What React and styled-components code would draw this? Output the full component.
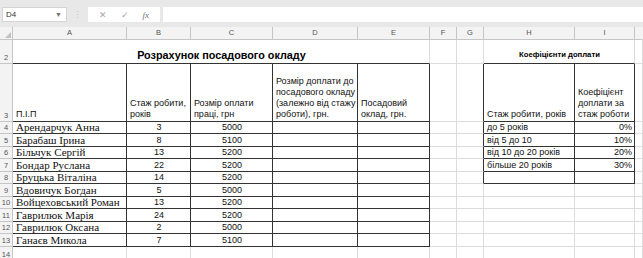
import React from "react";
import styled, { createGlobalStyle } from "styled-components";

const GlobalStyle = createGlobalStyle`
  html, body {
    margin: 0;
    padding: 0;
    background: #ffffff;
    font-family: "Liberation Sans", Arial, sans-serif;
  }
`;

const DARK = "#333333";
const GRID = "#dcdcdc";
const HEAD_LINE = "#c6c6c6";

const Page = styled.div`
  width: 643px;
  height: 258px;
  overflow: hidden;
  background: #fff;
`;

const Toolbar = styled.div`
  display: flex;
  align-items: center;
  height: 27px;
  box-sizing: border-box;
  padding: 7px 0 5px 2px;
  background: #e8e8e8;
`;

const NameBox = styled.div`
  display: flex;
  align-items: center;
  justify-content: space-between;
  width: 65px;
  height: 15px;
  box-sizing: border-box;
  padding: 0 4px 0 3px;
  background: #fff;
  border: 1px solid #d4d4d4;
  font-size: 8px;
  color: #333;
`;

const Caret = styled.span`
  font-size: 7px;
  color: #777;
`;

const Dots = styled.div`
  width: 21px;
  text-align: center;
  color: #c4c4c4;
  font-size: 9px;
`;

const FuncBox = styled.div`
  display: flex;
  align-items: center;
  justify-content: space-around;
  width: 72px;
  height: 15px;
  box-sizing: border-box;
  padding: 0 4px;
  background: #fff;
  margin-right: 3px;
  color: #a8a8a8;
  font-size: 9px;
`;

const Fx = styled.span`
  font-family: "Liberation Serif", serif;
  font-style: italic;
  font-size: 9px;
  color: #777;
`;

const Formula = styled.div`
  flex: 1;
  height: 15px;
  background: #fff;
`;

const Sheet = styled.div`
  display: grid;
  grid-template-columns: 13px 114px 64px 82px 85px 72px 27px 27px 91px 60px 1fr;
  grid-template-rows: 13px 23.5px 58px repeat(10, 12.5px) 14px;
`;

const Head = styled.div`
  display: flex;
  align-items: ${(p) => (p.$row ? "flex-end" : "center")};
  justify-content: center;
  box-sizing: border-box;
  background: #f3f3f3;
  border-right: 1px solid ${(p) => p.$br || HEAD_LINE};
  border-bottom: 1px solid ${(p) => p.$bb || HEAD_LINE};
  font-size: 7.5px;
  color: #555;
  line-height: 10px;
  overflow: hidden;
  position: relative;
`;

const Corner = styled.svg`
  position: absolute;
  right: 1px;
  bottom: 1px;
`;

const Cell = styled.div`
  grid-column: span ${(p) => p.$span || 1};
  display: flex;
  align-items: flex-end;
  justify-content: ${(p) =>
    p.$h === "center" ? "center" : p.$h === "right" ? "flex-end" : "flex-start"};
  box-sizing: border-box;
  padding: 0 2px 0 3px;
  border-right: 1px solid ${(p) => p.$br};
  border-bottom: 1px solid ${(p) => p.$bb};
  white-space: nowrap;
  overflow: hidden;
  color: #111;
  font-family: ${(p) =>
    p.$serif ? '"Liberation Serif", "Times New Roman", serif' : '"Liberation Sans", Arial, sans-serif'};
  font-size: ${(p) => (p.$serif ? "11px" : "9px")};
  line-height: ${(p) => (p.$serif ? "12px" : "11px")};
`;

const Title = styled.span`
  font-weight: bold;
  font-size: ${(p) => p.$size};
  line-height: 14px;
  padding-bottom: 1px;
  color: #000;
`;

const Lines = styled.div`
  display: flex;
  flex-direction: column;
  padding-bottom: 1px;
  line-height: 11px;
`;

const letters = ["A", "B", "C", "D", "E", "F", "G", "H", "I", ""];

const names = [
  "Арендарчук Анна",
  "Барабаш Ірина",
  "Більчук Сергій",
  "Бондар Руслана",
  "Бруцька Віталіна",
  "Вдовичук Богдан",
  "Войцеховський Роман",
  "Гаврилюк Марія",
  "Гаврилюк Оксана",
  "Ганаєв Микола",
];
const stazh = [3, 8, 13, 22, 14, 5, 13, 24, 2, 7];
const pay = [5000, 5100, 5200, 5200, 5200, 5000, 5200, 5200, 5000, 5100];
const coef = [
  ["до 5 років", "0%"],
  ["від 5 до 10", "10%"],
  ["від 10 до 20 років", "20%"],
  ["більше 20 років", "30%"],
];

const headers = {
  0: ["П.І.П"],
  1: ["Стаж робити,", "років"],
  2: ["Розмір оплати", "праці, грн"],
  3: ["Розмір доплати до", "посадового окладу", "(залежно від стажу", "роботи), грн."],
  4: ["Посадовий", "оклад, грн."],
  7: ["Стаж робити, років"],
  8: ["Коефіцієнт", "доплати за", "стаж роботи"],
};

const boxed = (r, c) =>
  (r >= 3 && r <= 13 && c >= 0 && c <= 4) || (r >= 3 && r <= 8 && (c === 7 || c === 8));

const edge = (r, c) => ({
  $br: boxed(r, c) || boxed(r, c + 1) ? DARK : GRID,
  $bb: boxed(r, c) || boxed(r + 1, c) ? DARK : GRID,
});

function content(r, c) {
  if (r === 3 && headers[c]) {
    return { node: <Lines>{headers[c].map((l) => <span key={l}>{l}</span>)}</Lines> };
  }
  const i = r - 4;
  if (r >= 4 && r <= 13) {
    if (c === 0) return { node: names[i], serif: true };
    if (c === 1) return { node: stazh[i], h: "center" };
    if (c === 2) return { node: pay[i], h: "center" };
  }
  if (r >= 4 && r <= 7) {
    if (c === 7) return { node: coef[i][0] };
    if (c === 8) return { node: coef[i][1], h: "right" };
  }
  return { node: null };
}

const App = () => {
  const cells = [];

  cells.push(
    <Head key="corner">
      <Corner width="6" height="6" viewBox="0 0 6 6">
        <polygon points="6,0 6,6 0,6" fill="#c2c2c2" />
      </Corner>
    </Head>
  );
  letters.forEach((l, c) =>
    cells.push(
      <Head key={"h" + c} $br={c === 9 ? "transparent" : undefined}>
        {l}
      </Head>
    )
  );

  for (let r = 2; r <= 14; r++) {
    cells.push(
      <Head key={"r" + r} $row>
        {r}
      </Head>
    );
    if (r === 2) {
      cells.push(
        <Cell key="t1" $span={5} $h="center" $br={GRID} $bb={DARK}>
          <Title $size="10.8px">Розрахунок посадового окладу</Title>
        </Cell>,
        <Cell key="t2" {...edge(2, 5)} />,
        <Cell key="t3" {...edge(2, 6)} />,
        <Cell key="t4" $span={2} $h="center" $br={GRID} $bb={DARK}>
          <Title $size="7.7px">Коефіцієнти доплати</Title>
        </Cell>,
        <Cell key="t5" {...edge(2, 9)} />
      );
      continue;
    }
    for (let c = 0; c <= 9; c++) {
      const { node, serif, h } = content(r, c);
      cells.push(
        <Cell key={r + "-" + c} {...edge(r, c)} $serif={serif} $h={h}>
          {node}
        </Cell>
      );
    }
  }

  return (
    <Page>
      <GlobalStyle />
      <Toolbar>
        <NameBox>
          D4
          <Caret>▼</Caret>
        </NameBox>
        <Dots>⋮</Dots>
        <FuncBox>
          <span>✕</span>
          <span>✓</span>
          <Fx>fx</Fx>
        </FuncBox>
        <Formula />
      </Toolbar>
      <Sheet>{cells}</Sheet>
    </Page>
  );
};

export default App;
